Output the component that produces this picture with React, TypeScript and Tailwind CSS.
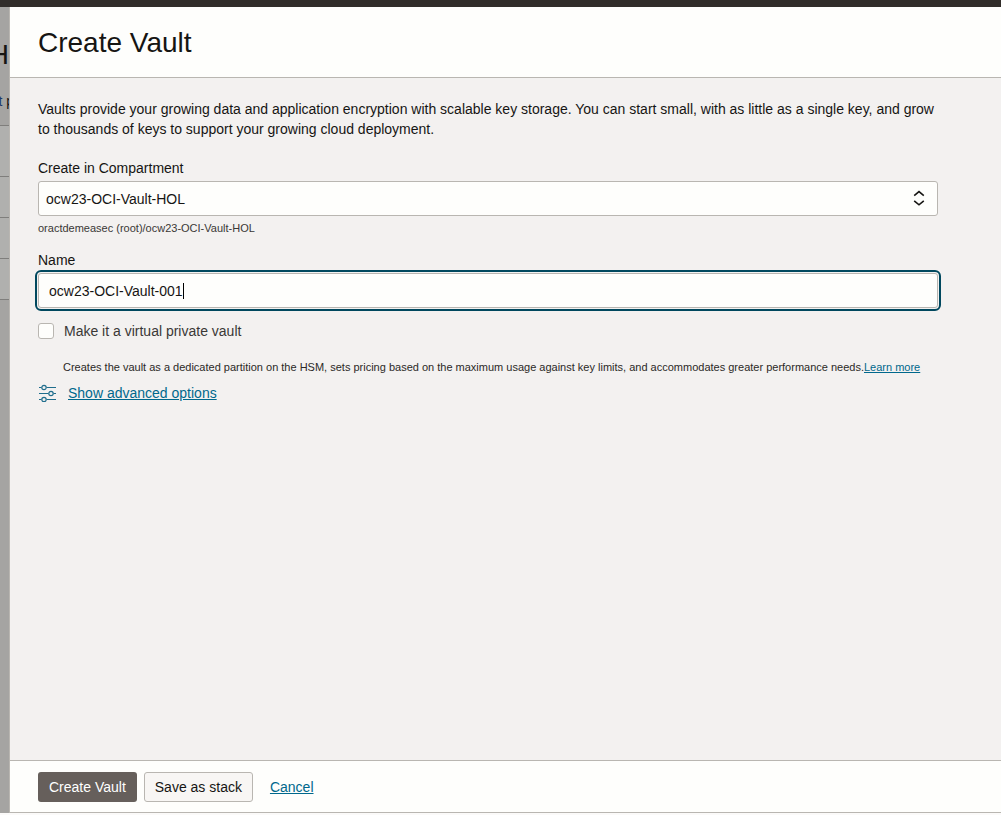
import { useState } from "react";

function ChevronsIcon() {
  return (
    <svg
      aria-hidden="true"
      viewBox="0 0 12 16"
      className="pointer-events-none absolute top-[9px] right-[13px] h-4 w-3"
      fill="none"
      stroke="#161513"
      strokeWidth="1.6"
    >
      <path d="M1.2 5.6 6 1.6l4.8 4M1.2 10.8l4.8 4 4.8-4" />
    </svg>
  );
}

function SlidersIcon() {
  return (
    <svg
      aria-hidden="true"
      viewBox="0 0 18 18"
      className="h-[18px] w-[18px] shrink-0"
      fill="none"
      stroke="#1f6d8c"
      strokeWidth="1.2"
    >
      <path d="M1 3.5h2.4M8.6 3.5H18M1 9.5h9.4M15.6 9.5H18M1 15.5h2.4M8.6 15.5H18" />
      <circle cx="6" cy="3.5" r="2.2" />
      <circle cx="13" cy="9.5" r="2.2" />
      <circle cx="6" cy="15.5" r="2.2" />
    </svg>
  );
}

function PageBehind() {
  return (
    <aside
      aria-hidden="true"
      className="w-[9px] shrink-0 overflow-hidden bg-[#a5a4a2] text-[#161513]"
    >
      <div className="flex h-[119px] flex-col items-end border-b border-[#7f7e7c] pt-8 whitespace-nowrap">
        <span className="text-[28px] leading-8">H</span>
        <span className="mt-5 mr-[-5px] text-sm leading-5">
          <span className="text-[#1c3a6b]">t</span> p
        </span>
      </div>
      <div className="h-[51px] border-b border-[#7f7e7c] bg-[#b0b0ae]" />
      <div className="h-[41px] border-b border-[#7f7e7c] bg-[#b0b0ae]" />
      <div className="h-[41px] border-b border-[#7f7e7c] bg-[#b0b0ae]" />
      <div className="h-[41px] border-b border-[#7f7e7c] bg-[#b0b0ae]" />
    </aside>
  );
}

export default function App() {
  const [name, setName] = useState("ocw23-OCI-Vault-001");
  const [isPrivate, setIsPrivate] = useState(false);

  return (
    <div className="flex min-h-screen flex-col bg-[#fbfaf9] pb-[2px] font-['Liberation_Sans',Arial,sans-serif] text-sm leading-5 text-[#161513]">
      <div className="h-[7px] shrink-0 bg-[#312d2a]" />
      <div className="flex flex-1">
        <PageBehind />
        <section
          role="dialog"
          aria-labelledby="title"
          className="flex min-w-0 flex-1 flex-col border-b border-l border-[#b9b6b1] bg-[#f3f1f0]"
        >
          <header className="border-b border-[#b9b6b1] bg-[#fefefc] px-7 pt-5 pb-[18px]">
            <h1 id="title" className="text-[28px] leading-8">
              Create Vault
            </h1>
          </header>

          <main className="flex flex-1 flex-col pt-[21px] pr-[63px] pl-7">
            <p>
              Vaults provide your growing data and application encryption with
              scalable key storage. You can start small, with as little as a
              single key, and grow to thousands of keys to support your growing
              cloud deployment.
            </p>

            <label htmlFor="compartment" className="mt-[19px]">
              Create in Compartment
            </label>
            <div className="relative mt-[3px]">
              <select
                id="compartment"
                className="block h-[35px] w-full appearance-none rounded-[3px] border border-[#b9b6b1] bg-[#fefefc] px-[7px]"
              >
                <option>ocw23-OCI-Vault-HOL</option>
              </select>
              <ChevronsIcon />
            </div>
            <p className="mt-1 text-[11px] leading-4 text-[#3a3836]">
              oractdemeasec (root)/ocw23-OCI-Vault-HOL
            </p>

            <label htmlFor="name" className="mt-[14px]">
              Name
            </label>
            <div className="mt-[3px] flex h-[35px] items-center rounded-[3px] border border-[#b9b6b1] bg-[#fefefc] px-[10px] outline-2 outline-offset-1 outline-[#00485e]">
              <input
                id="name"
                type="text"
                value={name}
                onChange={(e) => setName(e.target.value)}
                className="field-sizing-content max-w-full bg-transparent caret-transparent outline-none"
              />
              <span className="h-4 w-px bg-black" />
            </div>

            <div className="mt-[13px] flex items-center gap-[10px]">
              <input
                id="private"
                type="checkbox"
                checked={isPrivate}
                onChange={(e) => setIsPrivate(e.target.checked)}
                className="h-4 w-4 appearance-none rounded-[3px] border border-[#b9b6b1] bg-[#fefefc] checked:bg-[#00688c]"
              />
              <label htmlFor="private" className="text-[#3a3836]">
                Make it a virtual private vault
              </label>
            </div>
            <p className="mt-[18px] pl-[25px] text-[11px] leading-4 text-[#2b2927]">
              Creates the vault as a dedicated partition on the HSM, sets
              pricing based on the maximum usage against key limits, and
              accommodates greater performance needs.
              <a href="#learn" className="text-[#00688c] underline">
                Learn more
              </a>
            </p>
            <div className="mt-2 flex items-center gap-3">
              <SlidersIcon />
              <a href="#advanced" className="text-[#00688c] underline">
                Show advanced options
              </a>
            </div>
          </main>

          <footer className="flex items-center border-t border-[#b9b6b1] bg-[#fefefc] px-7 pt-[11px] pb-[10px]">
            <button
              type="button"
              className="h-[30px] rounded-[3px] bg-[#665f5b] px-[11px] text-white"
            >
              Create Vault
            </button>
            <button
              type="button"
              className="ml-[7px] h-[30px] rounded-[3px] border border-[#b9b6b1] bg-[#f8f6f4] px-[10px]"
            >
              Save as stack
            </button>
            <a href="#cancel" className="ml-[17px] text-[#00688c] underline">
              Cancel
            </a>
          </footer>
        </section>
      </div>
    </div>
  );
}
